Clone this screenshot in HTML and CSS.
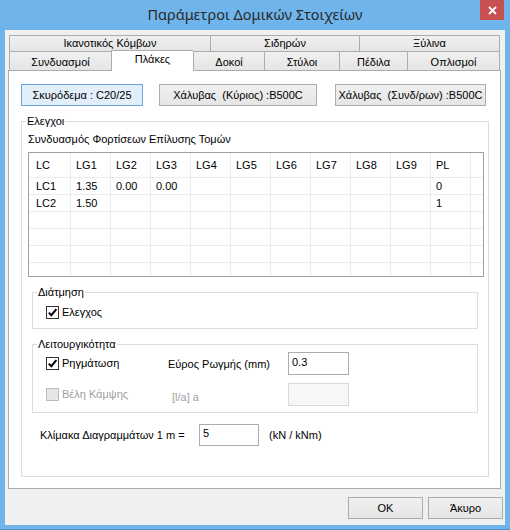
FILE: index.html
```html
<!DOCTYPE html>
<html lang="el">
<head>
<meta charset="utf-8">
<title>Παράμετροι Δομικών Στοιχείων</title>
<link rel="stylesheet" href="styles.css">
</head>
<body>
<div class="window">
  <div class="titlebar">
    <span class="tb-spacer"></span>
    <div class="title">Παράμετροι Δομικών Στοιχείων</div>
    <div class="tb-right">
      <div class="close">
        <svg width="9" height="9" viewBox="0 0 9 9"><path d="M1 1 L8 8 M8 1 L1 8" stroke="#fff" stroke-width="1.8" fill="none"/></svg>
      </div>
    </div>
  </div>
  <div class="client">
    <div class="tabs">
      <div class="tab-row back">
        <div class="tab t-ika">Ικανοτικός Κόμβων</div>
        <div class="tab t-sid">Σιδηρών</div>
        <div class="tab t-xyl last">Ξύλινα</div>
      </div>
      <div class="tab-row front">
        <div class="tab t-syn">Συνδυασμοί</div>
        <div class="tab t-pla selected">Πλάκες</div>
        <div class="tab t-dok">Δοκοί</div>
        <div class="tab t-sty">Στύλοι</div>
        <div class="tab t-ped">Πέδιλα</div>
        <div class="tab t-opl last">Οπλισμοί</div>
      </div>
    </div>
    <div class="panel">
      <div class="mat-buttons">
        <button class="btn focused b-con">Σκυρόδεμα : C20/25</button>
        <button class="btn b-st1">Χάλυβας  (Κύριος) :B500C</button>
        <button class="btn b-st2">Χάλυβας  (Συνδ/ρων) :B500C</button>
      </div>
      <fieldset class="group main">
        <legend>Ελεγχοι</legend>
        <div class="caption">Συνδυασμός Φορτίσεων Επίλυσης Τομών</div>
        <div class="grid">
          <div class="c h first">LC</div><div class="c h">LG1</div><div class="c h">LG2</div><div class="c h">LG3</div><div class="c h">LG4</div><div class="c h">LG5</div><div class="c h">LG6</div><div class="c h">LG7</div><div class="c h">LG8</div><div class="c h">LG9</div><div class="c h">PL</div><div class="c h end"></div>

          <div class="c first">LC1</div><div class="c">1.35</div><div class="c">0.00</div><div class="c">0.00</div><div class="c"></div><div class="c"></div><div class="c"></div><div class="c"></div><div class="c"></div><div class="c"></div><div class="c">0</div><div class="c end"></div>

          <div class="c first">LC2</div><div class="c">1.50</div><div class="c"></div><div class="c"></div><div class="c"></div><div class="c"></div><div class="c"></div><div class="c"></div><div class="c"></div><div class="c"></div><div class="c">1</div><div class="c end"></div>

          <div class="c first"></div><div class="c"></div><div class="c"></div><div class="c"></div><div class="c"></div><div class="c"></div><div class="c"></div><div class="c"></div><div class="c"></div><div class="c"></div><div class="c"></div><div class="c end"></div>
          <div class="c first"></div><div class="c"></div><div class="c"></div><div class="c"></div><div class="c"></div><div class="c"></div><div class="c"></div><div class="c"></div><div class="c"></div><div class="c"></div><div class="c"></div><div class="c end"></div>
          <div class="c first"></div><div class="c"></div><div class="c"></div><div class="c"></div><div class="c"></div><div class="c"></div><div class="c"></div><div class="c"></div><div class="c"></div><div class="c"></div><div class="c"></div><div class="c end"></div>
          <div class="c first"></div><div class="c"></div><div class="c"></div><div class="c"></div><div class="c"></div><div class="c"></div><div class="c"></div><div class="c"></div><div class="c"></div><div class="c"></div><div class="c"></div><div class="c end"></div>
          <div class="c first"></div><div class="c"></div><div class="c"></div><div class="c"></div><div class="c"></div><div class="c"></div><div class="c"></div><div class="c"></div><div class="c"></div><div class="c"></div><div class="c"></div><div class="c end"></div>
        </div>

        <fieldset class="group sub shear">
          <legend>Διάτμηση</legend>
          <div class="check-row">
            <span class="cb checked">
              <svg width="11" height="11" viewBox="0 0 11 11"><path d="M1.8 5.6 L4.3 8.2 L9.4 2.2" stroke="#000" stroke-width="2" fill="none"/></svg>
            </span>
            <span class="cb-label">Ελεγχος</span>
          </div>
        </fieldset>

        <fieldset class="group sub service">
          <legend>Λειτουργικότητα</legend>
          <div class="service-grid">
            <div class="check-row">
              <span class="cb checked">
                <svg width="11" height="11" viewBox="0 0 11 11"><path d="M1.8 5.6 L4.3 8.2 L9.4 2.2" stroke="#000" stroke-width="2" fill="none"/></svg>
              </span>
              <span class="cb-label">Ρηγμάτωση</span>
            </div>
            <div class="field-label">Εύρος Ρωγμής (mm)</div>
            <div class="textbox">0.3</div>

            <div class="check-row disabled">
              <span class="cb"></span>
              <span class="cb-label">Βέλη Κάμψης</span>
            </div>
            <div class="field-label disabled la">[l/a] a</div>
            <div class="textbox disabled"></div>
          </div>
        </fieldset>

        <div class="scale-row">
          <span class="scale-label">Κλίμακα Διαγραμμάτων 1 m =</span>
          <div class="textbox scale-box">5</div>
          <span class="units">(kN / kNm)</span>
        </div>
      </fieldset>
    </div>
    <div class="footer">
      <button class="btn dlg">OK</button>
      <button class="btn dlg">Άκυρο</button>
    </div>
  </div>
</div>
</body>
</html>
```

FILE: styles.css
```css
* { box-sizing: border-box; }

html, body {
  margin: 0;
  padding: 0;
  background: #ffffff;
}

body {
  font-family: "Liberation Sans", Arial, sans-serif;
  font-size: 11px;
  color: #000;
}

.window {
  width: 510px;
  height: 530px;
  background: #6fb4eb;
  display: flex;
  flex-direction: column;
  border-bottom: 1px solid #4f8fcb;
}

/* Title bar */
.titlebar {
  height: 30px;
  flex: none;
  display: grid;
  grid-template-columns: 1fr auto 1fr;
  align-items: start;
}

.title {
  font-family: "Noto Sans", "Open Sans", sans-serif;
  font-size: 14.5px;
  line-height: 28px;
  color: #2a2a2a;
  white-space: nowrap;
}

.tb-right {
  display: flex;
  justify-content: flex-end;
  padding-right: 6px;
}

.close {
  width: 24px;
  height: 20px;
  background: #c75050;
  display: flex;
  align-items: center;
  justify-content: center;
}

.close svg { display: block; }

/* Client area */
.client {
  flex: 1;
  margin: 0 5px 4px 5px;
  background: #f0f0f0;
  padding: 5px 2px 0 3px;
  display: flex;
  flex-direction: column;
}

/* Tabs */
.tabs {
  margin: 0 3px 0 1px;
  flex: none;
}

.tab-row {
  display: flex;
  align-items: flex-start;
}

.tab {
  flex: none;
  border-top: 1px solid #acacac;
  border-left: 1px solid #acacac;
  background: linear-gradient(#f0f0f0, #e5e5e5);
  text-align: center;
  white-space: nowrap;
  color: #000;
}

.tab.last { border-right: 1px solid #acacac; }

.back .tab {
  height: 16px;
  line-height: 15px;
}

.front .tab {
  height: 19px;
  line-height: 18px;
  padding-top: 1px;
}

.tab.selected {
  background: #ffffff;
  height: 21px;
  margin-top: -1px;
  margin-bottom: -2px;
  line-height: 17px;
  padding-top: 0;
  position: relative;
  z-index: 2;
}

.t-ika { width: 201px; }
.t-sid { width: 149px; }
.t-xyl { width: 141px; }
.t-syn { width: 102px; }
.t-pla { width: 82px; }
.t-dok { width: 71px; }
.t-sty { width: 75px; }
.t-ped { width: 68px; }
.t-opl { width: 93px; }

/* Panel */
.panel {
  flex: 1;
  margin-right: 2px;
  background: #ffffff;
  border: 1px solid #acacac;
  padding: 13px 0 0 12px;
  position: relative;
  z-index: 1;
}

.mat-buttons {
  display: flex;
  height: 22px;
}

.btn {
  font-family: "Liberation Sans", Arial, sans-serif;
  font-size: 11px;
  color: #000;
  height: 22px;
  padding: 0;
  border: 1px solid #acacac;
  background: linear-gradient(#f0f0f0, #e5e5e5);
  white-space: pre;
  text-align: center;
}

.btn.focused {
  border-color: #6aa4dc;
  background: #e2eefa;
}

.b-con { width: 122px; }
.b-st1 { width: 158px; margin-left: 16px; }
.b-st2 { width: 151px; margin-left: 18px; }

/* Group boxes */
.group {
  margin: 0;
  padding: 0;
  min-width: 0;
  border: 1px solid #dcdcdc;
}

.group > legend {
  margin-left: 4px;
  padding: 0 1px;
  line-height: 14px;
  font-size: 11px;
}

.group.main {
  margin: 8px 11px 0 0;
  padding-bottom: 30px;
}

.caption {
  margin: 5px 0 0 6px;
  line-height: 13px;
}

/* Data grid */
.grid {
  margin: 6px 0 0 6px;
  width: 456px;
  height: 125px;
  border: 1px solid #a0a0a0;
  overflow: hidden;
  display: grid;
  grid-template-columns: 42px repeat(10, 40px) 12px;
  grid-template-rows: 25px;
  grid-auto-rows: 17px;
}

.c {
  border-right: 1px solid #ececec;
  border-bottom: 1px solid #ececec;
  padding-left: 5px;
  line-height: 16px;
  white-space: nowrap;
  overflow: hidden;
}

.c.h { line-height: 24px; }
.c.first { padding-left: 7px; }
.c.end { border-right: none; }

/* Sub groups */
.group.sub {
  margin: 8px 10px 0 10px;
}

.shear { padding: 6px 0 8px 0; }
.service { padding: 1px 0 6px 0; }

.shear > .check-row,
.service > .service-grid {
  margin-left: 13px;
}

.check-row {
  display: flex;
  align-items: center;
  height: 15px;
}

.cb {
  width: 13px;
  height: 13px;
  border: 1px solid #333333;
  background: #ffffff;
  display: flex;
  align-items: center;
  justify-content: center;
  flex: none;
}

.cb svg { display: block; }

.cb-label {
  margin-left: 3px;
  line-height: 13px;
}

.check-row.disabled .cb {
  border-color: #bcbcbc;
  background: #e6e6e6;
}

.check-row.disabled .cb-label { color: #a0a0a0; }

.service-grid {
  display: grid;
  grid-template-columns: 122px 120px 61px;
  grid-template-rows: 23px 23px;
  row-gap: 8px;
  align-items: center;
}

.service-grid .check-row { align-self: center; }

.field-label { line-height: 13px; padding-top: 2px; }
.field-label.disabled { color: #a0a0a0; }
.field-label.la { padding-left: 4px; padding-top: 5px; }

.textbox {
  height: 23px;
  border: 1px solid #abadb3;
  background: #ffffff;
  padding: 3px 0 0 3px;
  line-height: 13px;
}

.textbox.disabled {
  border-color: #d9d9d9;
  background: #f7f7f7;
}

/* Scale row */
.scale-row {
  display: flex;
  align-items: center;
  margin: 11px 0 0 18px;
}

.scale-label {
  width: 159px;
  line-height: 13px;
  padding-top: 1px;
}

.scale-box {
  width: 60px;
  height: 22px;
  padding-top: 2px;
}

.units {
  margin-left: 10px;
  line-height: 13px;
}

/* Footer */
.footer {
  flex: none;
  height: 36px;
  display: flex;
  justify-content: flex-end;
  gap: 5px;
  padding-top: 8px;
}

.btn.dlg { width: 75px; }
```
